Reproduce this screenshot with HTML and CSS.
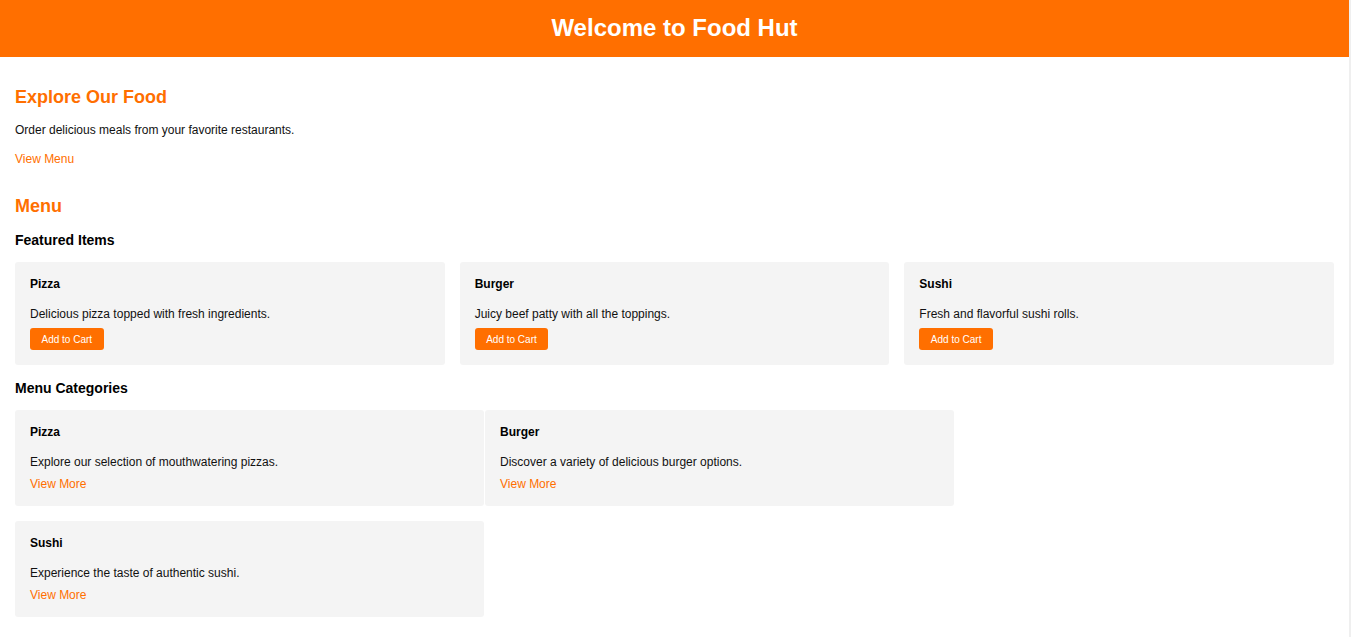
FILE: index.html
```html
<!DOCTYPE html>
<html lang="en">
<head>
<meta charset="utf-8">
<title>Food Hut</title>
<link rel="stylesheet" href="styles.css">
</head>
<body>
<header class="site-header">
  <h1>Welcome to Food Hut</h1>
</header>
<main class="content">
  <section class="hero">
    <h2 class="section-title">Explore Our Food</h2>
    <p class="lead">Order delicious meals from your favorite restaurants.</p>
    <a class="link" href="#menu">View Menu</a>
  </section>
  <section class="menu" id="menu">
    <h2 class="section-title">Menu</h2>
    <h3 class="sub-title">Featured Items</h3>
    <div class="featured-grid">
      <div class="card">
        <h4 class="card-title">Pizza</h4>
        <p class="card-text">Delicious pizza topped with fresh ingredients.</p>
        <button class="btn">Add to Cart</button>
      </div>
      <div class="card">
        <h4 class="card-title">Burger</h4>
        <p class="card-text">Juicy beef patty with all the toppings.</p>
        <button class="btn">Add to Cart</button>
      </div>
      <div class="card">
        <h4 class="card-title">Sushi</h4>
        <p class="card-text">Fresh and flavorful sushi rolls.</p>
        <button class="btn">Add to Cart</button>
      </div>
    </div>
    <h3 class="sub-title">Menu Categories</h3>
    <div class="category-list">
      <div class="card category">
        <h4 class="card-title">Pizza</h4>
        <p class="card-text">Explore our selection of mouthwatering pizzas.</p>
        <a class="link" href="#">View More</a>
      </div>
      <div class="card category">
        <h4 class="card-title">Burger</h4>
        <p class="card-text">Discover a variety of delicious burger options.</p>
        <a class="link" href="#">View More</a>
      </div>
      <div class="card category">
        <h4 class="card-title">Sushi</h4>
        <p class="card-text">Experience the taste of authentic sushi.</p>
        <a class="link" href="#">View More</a>
      </div>
    </div>
  </section>
</main>
</body>
</html>
```

FILE: styles.css
```css
html {
  background: #efefef;
}

body {
  margin: 0 2px 0 0;
  min-height: 100vh;
  background: #ffffff;
  font-family: "Liberation Sans", Arial, sans-serif;
  font-size: 12px;
  color: #111111;
}

.site-header {
  background: #ff6f00;
  height: 57px;
  box-sizing: border-box;
  padding-top: 14px;
  text-align: center;
}

.site-header h1 {
  margin: 0;
  font-size: 24px;
  line-height: 27px;
  font-weight: bold;
  color: #ffffff;
}

.content {
  padding: 0 15px 15px;
}

.hero {
  padding-top: 30px;
}

.section-title {
  margin: 0;
  font-size: 18px;
  font-weight: bold;
  color: #ff6f00;
}

.lead {
  margin: 15px 0 15px;
}

.link {
  display: block;
  color: #ff6f00;
  text-decoration: none;
  width: max-content;
}

.menu {
  padding-top: 30px;
}

.sub-title {
  margin: 15px 0 14px;
  font-size: 14px;
  font-weight: bold;
  color: #000000;
}

.featured-grid {
  display: grid;
  grid-template-columns: repeat(3, 1fr);
  gap: 15px;
}

.card {
  background: #f4f4f4;
  border-radius: 3px;
  padding: 15px;
}

.card-title {
  margin: 0 0 16px;
  font-size: 12px;
  font-weight: bold;
  color: #000000;
}

.card-text {
  margin: 0 0 7px;
}

.category .card-text {
  margin-bottom: 8px;
}

.btn {
  display: block;
  height: 22px;
  padding: 0 11.5px;
  border: none;
  border-radius: 3px;
  background: #ff6f00;
  color: #ffffff;
  font-family: "Liberation Sans", Arial, sans-serif;
  font-size: 10px;
}

.category-list {
  display: flex;
  flex-wrap: wrap;
  column-gap: 1px;
  row-gap: 15px;
}

.category {
  width: 469px;
  box-sizing: border-box;
}
```
